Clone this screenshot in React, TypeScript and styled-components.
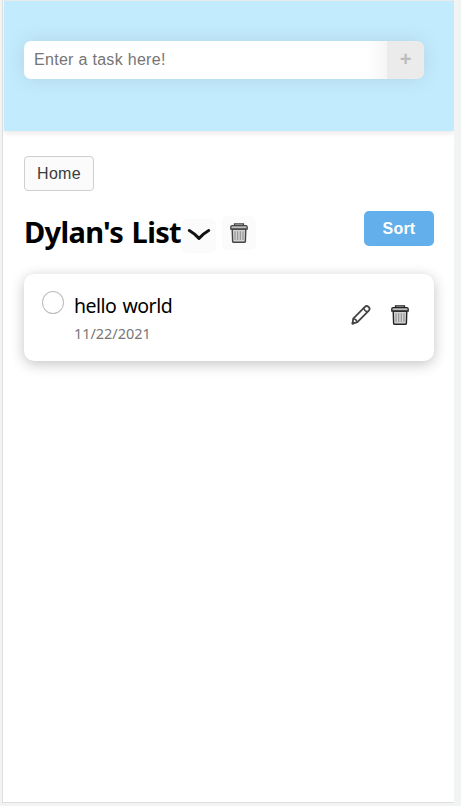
import React from "react";
import styled, { createGlobalStyle } from "styled-components";

const GlobalStyle = createGlobalStyle`
  * { box-sizing: border-box; }
  body { margin: 0; background: #f2f3f3; overflow: hidden; }
  button, input { font-family: "Liberation Sans", Arial, sans-serif; font-size: 16px; margin: 0; }
`;

const Backdrop = styled.div`
  height: 806px;
  padding: 0 7px 3px 2px;
`;

const Screen = styled.div`
  height: 803px;
  padding-left: 1px;
  background: #fff;
  border: solid #dedede;
  border-width: 1px 0 1px 1px;
  border-top-color: #e9ebeb;
  overflow: hidden;
`;

const Header = styled.header`
  height: 130px;
  padding: 40px 30px 0 20px;
  background: #c3ebfe;
  box-shadow: 0 2px 6px rgba(0, 0, 0, 0.1);
`;

const TaskForm = styled.form`
  display: flex;
  height: 38px;
  border-radius: 7px;
  box-shadow: 0 0 20px rgba(0, 0, 0, 0.1);
`;

const TaskInput = styled.input`
  flex: 1;
  min-width: 0;
  padding: 0 10px;
  border: 0;
  border-radius: 7px 0 0 7px;
  background: linear-gradient(to left, #f5f5f5 0, #fff 20px);
  letter-spacing: 0.3px;
  &::placeholder { color: #757575; opacity: 1; }
`;

const AddButton = styled.button`
  width: 37px;
  padding: 0 0 2px;
  border: 0;
  border-radius: 0 7px 7px 0;
  background: #ebebeb;
  color: #bcbcbc;
  font-weight: 700;
  font-size: 20px;
`;

const Content = styled.main`
  padding: 25px 20px 0;
`;

const HomeButton = styled.button`
  display: block;
  width: 70px;
  height: 35px;
  padding: 0;
  border: 1px solid #cfcfcf;
  border-radius: 4px;
  background: #fbfbfb;
  color: #3c3c3c;
  letter-spacing: 0.3px;
`;

const TitleRow = styled.div`
  display: flex;
  align-items: flex-start;
  height: 63px;
  margin-top: 20px;
`;

const Title = styled.h1`
  width: 157px;
  margin: 3px 0 0;
  font: 700 29px/36px "Noto Sans", sans-serif;
  letter-spacing: -0.65px;
  word-spacing: 1.5px;
  white-space: nowrap;
  color: #000;
`;

const IconButton = styled.button<{ $offset?: number; $drop?: number; $filled?: boolean }>`
  display: flex;
  align-items: center;
  justify-content: center;
  width: 34px;
  height: 34px;
  padding: 0 0 1px;
  margin-top: ${({ $drop = 0 }) => $drop}px;
  margin-left: ${({ $offset = 0 }) => $offset}px;
  border: 0;
  border-radius: 5px;
  background: ${({ $filled }) => ($filled ? "#fbfbfb" : "transparent")};
  svg { display: block; }
`;

const TitleActions = styled.div`
  display: flex;
  padding-top: 5px;
`;

const SortButton = styled.button`
  width: 70px;
  height: 35px;
  margin-left: auto;
  padding: 0;
  border: 0;
  border-radius: 5px;
  background: #62afec;
  color: #fff;
  font-weight: 700;
  letter-spacing: 0.2px;
`;

const TaskCard = styled.article`
  display: flex;
  height: 87px;
  padding: 17px 17px 0 18px;
  border-radius: 10px;
  background: #fff;
  box-shadow: 0 3px 14px rgba(0, 0, 0, 0.24);
`;

const Check = styled.span`
  width: 22px;
  height: 23px;
  border: 1px solid #bebebe;
  border-radius: 50%;
`;

const TaskText = styled.div`
  flex: 1;
  margin-left: 10px;
  font-family: "Noto Sans", sans-serif;
  white-space: nowrap;
`;

const TaskName = styled.div`
  margin-top: 2px;
  font-size: 19.5px;
  line-height: 26px;
  letter-spacing: -0.5px;
  word-spacing: 1.5px;
  color: #000;
`;

const TaskDate = styled.div`
  margin-top: 4px;
  font-size: 14.5px;
  line-height: 20px;
  letter-spacing: -0.05px;
  color: #777;
`;

const TaskActions = styled.div`
  display: flex;
  padding-top: 7px;
`;

const Chevron = () => (
  <svg width="24" height="16" viewBox="0 0 24 16" fill="none">
    <path d="M2.300 2Q7 4.600 12 9.900Q17 4.600 21.700 2" transform="translate(0 .5)" stroke="#111" strokeWidth="3" strokeLinecap="round" strokeLinejoin="round" />
  </svg>
);

const Trash = ({ dark = false }: { dark?: boolean }) => (
  <svg width="18" height="20" viewBox="0 0 18 20" fill="none" stroke={dark ? "#242424" : "#444"}>
    <path d="M2.200 6h13.600l-.4 12.300q-.1.900-1 .9H3.600q-.9 0-1-.9z" fill="#d0d0d0" strokeWidth="1.400" />
    <path d="M4.500 2.800V.8h9v2" fill="#d0d0d0" strokeWidth="1.300" />
    <path d="M.8 6V4q0-1.400 1.400-1.400h13.600q1.400 0 1.400 1.400v2z" fill="#bcbcbc" strokeWidth="1.300" />
    <path d="M5 8.300v8.700M7.700 8.300v8.700M10.300 8.300v8.700M13 8.300v8.700" stroke="#8c8c8c" strokeWidth="1" />
  </svg>
);

const Pencil = () => (
  <svg width="20" height="20" viewBox="0 0 20 20" fill="none" stroke="#444" strokeWidth="1.800" strokeLinejoin="round" strokeLinecap="round">
    <path d="M1.500 18.600l.7-5L13.900 1.800q1.700-1.700 3.700.1 1.900 1.900.2 3.700L6.400 17.200z" />
    <path d="M12.800 3.200q.5 3.100 3.600 3.600M2.600 13.700q2.900.5 3.500 3.400" strokeWidth="1.400" />
    <path d="M1.500 18.600l1.400-.3-1-1.200z" fill="#444" />
  </svg>
);

export default function App() {
  return (
    <Backdrop>
      <GlobalStyle />
      <Screen>
        <Header>
          <TaskForm>
            <TaskInput placeholder="Enter a task here!" />
            <AddButton type="button" disabled>+</AddButton>
          </TaskForm>
        </Header>
        <Content>
          <HomeButton>Home</HomeButton>
          <TitleRow>
            <Title>Dylan's List</Title>
            <TitleActions>
              <IconButton $filled $offset={1} $drop={3} aria-label="Choose list"><Chevron /></IconButton>
              <IconButton $filled $offset={6} aria-label="Delete list"><Trash /></IconButton>
            </TitleActions>
            <SortButton>Sort</SortButton>
          </TitleRow>
          <TaskCard>
            <Check role="checkbox" aria-checked={false} />
            <TaskText>
              <TaskName>hello world</TaskName>
              <TaskDate>11/22/2021</TaskDate>
            </TaskText>
            <TaskActions>
              <IconButton aria-label="Edit task"><Pencil /></IconButton>
              <IconButton $offset={5} aria-label="Delete task"><Trash dark /></IconButton>
            </TaskActions>
          </TaskCard>
        </Content>
      </Screen>
    </Backdrop>
  );
}
